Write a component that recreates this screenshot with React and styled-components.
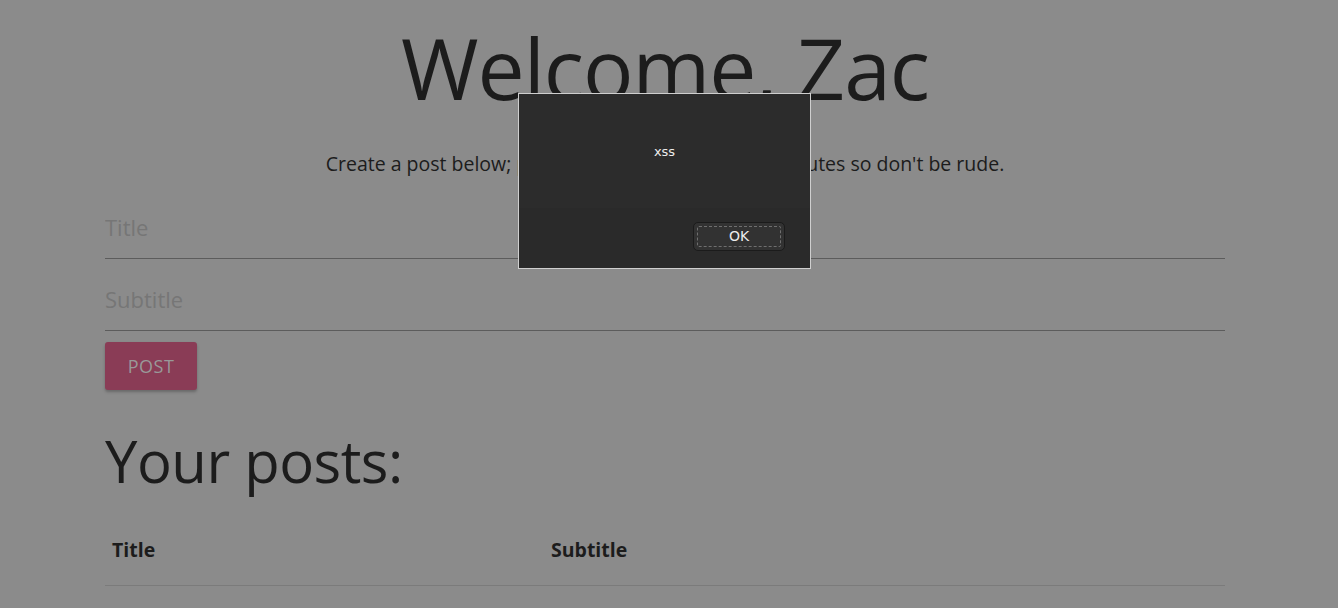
import React from 'react';
import styled, { createGlobalStyle } from 'styled-components';

const GlobalStyle = createGlobalStyle`
    html, body {
        margin: 0;
        padding: 0;
        background: #8b8b8b;
        font-family: "Open Sans", "Noto Sans", sans-serif;
        color: #1c1c1c;
        overflow: hidden;
    }
    #root {
        width: 1330px;
    }
`;

const Container = styled.div`
    width: 1120px;
    margin: 0 auto;
`;

const Heading = styled.h1`
    margin: 22px 0 0;
    font-size: 84px;
    font-weight: 400;
    line-height: 92px;
    text-align: center;
    letter-spacing: -1px;
`;

const Lead = styled.p`
    margin: 38px 0 0;
    font-size: 19.5px;
    line-height: 24px;
    text-align: center;
`;

const Field = styled.input`
    display: block;
    box-sizing: border-box;
    width: 100%;
    height: 56px;
    margin: ${p => p.$first ? '27px' : '16px'} 0 0;
    padding: 0 0 8px;
    border: none;
    border-bottom: 1px solid #5c5c5c;
    background: transparent;
    font-family: inherit;
    font-size: 22px;
    color: #1c1c1c;
    outline: none;

    &::placeholder {
        color: #767676;
    }
`;

const PostButton = styled.button`
    display: block;
    margin-top: 11px;
    width: 92px;
    height: 48px;
    border: none;
    border-radius: 3px;
    background: #8a3c56;
    color: #999;
    font-family: inherit;
    font-size: 18px;
    letter-spacing: 0.5px;
    box-shadow: 0 2px 3px rgba(0, 0, 0, 0.25);
`;

const SubHeading = styled.h2`
    margin: 36px 0 0;
    font-size: 58px;
    font-weight: 400;
    line-height: 70px;
    letter-spacing: -0.5px;
`;

const TableHead = styled.div`
    display: grid;
    grid-template-columns: 439px 1fr;
    margin-top: 27px;
    border-bottom: 1px solid #7b7b7b;
`;

const HeadCell = styled.div`
    padding: 15px 7px 23px;
    font-size: 19.5px;
    font-weight: 700;
    line-height: 24px;
`;

const Dialog = styled.div`
    position: fixed;
    top: 93px;
    left: 518px;
    width: 291px;
    height: 174px;
    border: 1px solid #cfcfcf;
    background: #2b2b2b;
    display: flex;
    flex-direction: column;
    font-family: "DejaVu Sans", sans-serif;
`;

const Message = styled.div`
    flex: 1;
    padding-top: 50px;
    text-align: center;
    font-size: 13px;
    color: #ececec;
    background: #2c2c2c;
`;

const Footer = styled.div`
    height: 60px;
    display: flex;
    justify-content: flex-end;
    align-items: flex-start;
    padding: 14px 25px 0 0;
    box-sizing: border-box;
    background: #2a2a2a;
`;

const OkButton = styled.button`
    width: 92px;
    height: 29px;
    padding: 3px;
    border: 1px solid #1b1b1b;
    border-radius: 5px;
    background: #323232;
    font-family: "DejaVu Sans", sans-serif;
    font-size: 14px;
    color: #ececec;

    span {
        display: block;
        height: 100%;
        line-height: 19px;
        box-sizing: border-box;
        border: 1px dashed #6f6f6f;
        border-radius: 2px;
    }
`;

const App = () => (
    <>
        <GlobalStyle />
        <Container>
            <Heading>Welcome, Zac</Heading>
            <Lead>Create a post below; posts are deleted every few minutes so don't be rude.</Lead>
            <Field $first placeholder="Title" />
            <Field placeholder="Subtitle" />
            <PostButton>POST</PostButton>
            <SubHeading>Your posts:</SubHeading>
            <TableHead>
                <HeadCell>Title</HeadCell>
                <HeadCell>Subtitle</HeadCell>
            </TableHead>
        </Container>
        <Dialog>
            <Message>xss</Message>
            <Footer>
                <OkButton><span>OK</span></OkButton>
            </Footer>
        </Dialog>
    </>
);

export default App;
